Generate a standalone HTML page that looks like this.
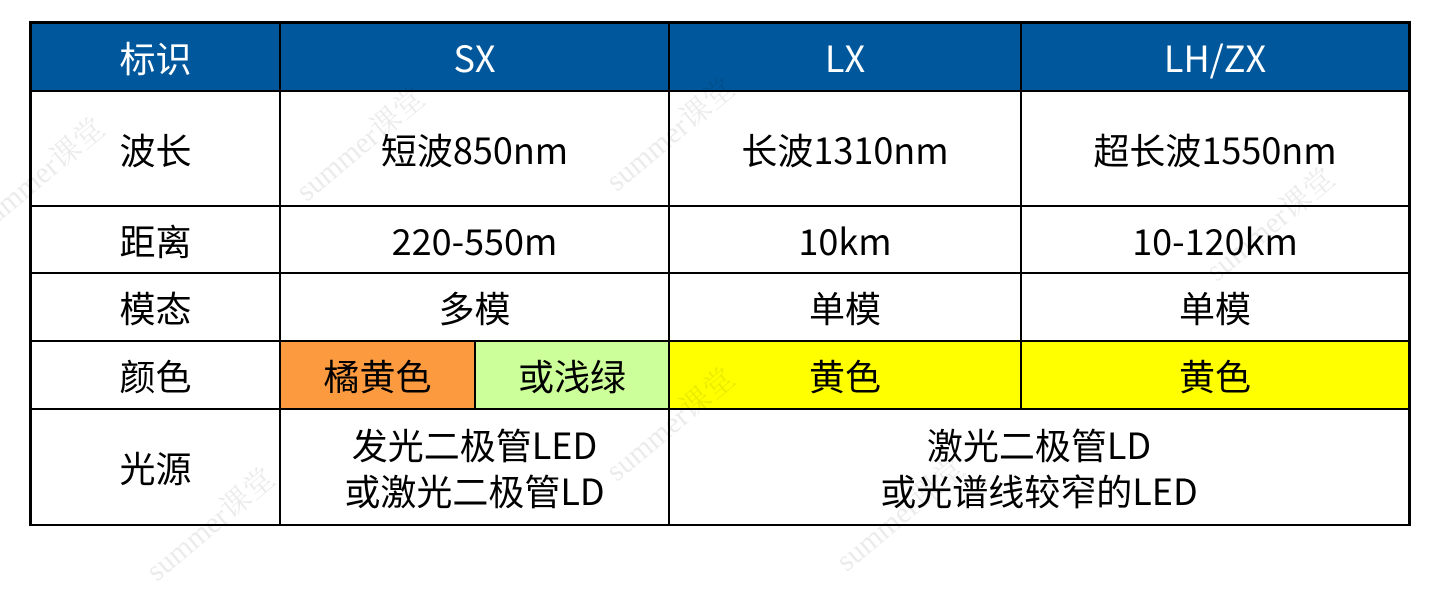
<!DOCTYPE html><html><head><meta charset="utf-8"><style>
body{margin:0;width:1448px;height:552px;background:#fff;position:relative;overflow:hidden;font-family:"Noto Sans CJK SC","Liberation Sans",sans-serif;}
.c{position:absolute;box-sizing:border-box;display:flex;align-items:center;justify-content:center;text-align:center;font-size:36px;color:#000;line-height:46px;border:2px solid #000;}
.h{background:#01579b;color:#fff;}
.wm{position:absolute;color:rgba(0,0,0,0.08);font-family:"Liberation Serif","Noto Serif CJK SC",serif;font-size:30px;transform:rotate(-40deg);white-space:nowrap}
</style></head><body>
<div style="position:absolute;left:29px;top:21px;width:1382px;height:505px;border:2px solid #000;box-sizing:border-box"></div>
<div class="c h" style="left:30px;top:22px;width:251px;height:70px">标识</div>
<div class="c h" style="left:279px;top:22px;width:391px;height:70px">SX</div>
<div class="c h" style="left:668px;top:22px;width:354px;height:70px">LX</div>
<div class="c h" style="left:1020px;top:22px;width:390px;height:70px">LH/ZX</div>

<div class="c" style="left:30px;top:90px;width:251px;height:117px">波长</div>
<div class="c" style="left:279px;top:90px;width:391px;height:117px">短波850nm</div>
<div class="c" style="left:668px;top:90px;width:354px;height:117px">长波1310nm</div>
<div class="c" style="left:1020px;top:90px;width:390px;height:117px">超长波1550nm</div>

<div class="c" style="left:30px;top:205px;width:251px;height:69px">距离</div>
<div class="c" style="left:279px;top:205px;width:391px;height:69px">220-550m</div>
<div class="c" style="left:668px;top:205px;width:354px;height:69px">10km</div>
<div class="c" style="left:1020px;top:205px;width:390px;height:69px">10-120km</div>

<div class="c" style="left:30px;top:272px;width:251px;height:70px">模态</div>
<div class="c" style="left:279px;top:272px;width:391px;height:70px">多模</div>
<div class="c" style="left:668px;top:272px;width:354px;height:70px">单模</div>
<div class="c" style="left:1020px;top:272px;width:390px;height:70px">单模</div>

<div class="c" style="left:30px;top:340px;width:251px;height:70px">颜色</div>
<div class="c" style="left:279px;top:340px;width:197px;height:70px;background:#fb9a3f">橘黄色</div>
<div class="c" style="left:474px;top:340px;width:196px;height:70px;background:#ccff99">或浅绿</div>
<div class="c" style="left:668px;top:340px;width:354px;height:70px;background:#ffff00">黄色</div>
<div class="c" style="left:1020px;top:340px;width:390px;height:70px;background:#ffff00">黄色</div>

<div class="c" style="left:30px;top:408px;width:251px;height:118px">光源</div>
<div class="c" style="left:279px;top:408px;width:391px;height:118px">发光二极管LED<br>或激光二极管LD</div>
<div class="c" style="left:668px;top:408px;width:742px;height:118px">激光二极管LD<br>或光谱线较窄的LED</div>

<div class="wm" style="left:-40px;top:150px">summer课堂</div>
<div class="wm" style="left:280px;top:120px">summer课堂</div>
<div class="wm" style="left:590px;top:110px">summer课堂</div>
<div class="wm" style="left:1190px;top:200px">summer课堂</div>
<div class="wm" style="left:590px;top:400px">summer课堂</div>
<div class="wm" style="left:130px;top:500px">summer课堂</div>
<div class="wm" style="left:820px;top:490px">summer课堂</div>
</body></html>
